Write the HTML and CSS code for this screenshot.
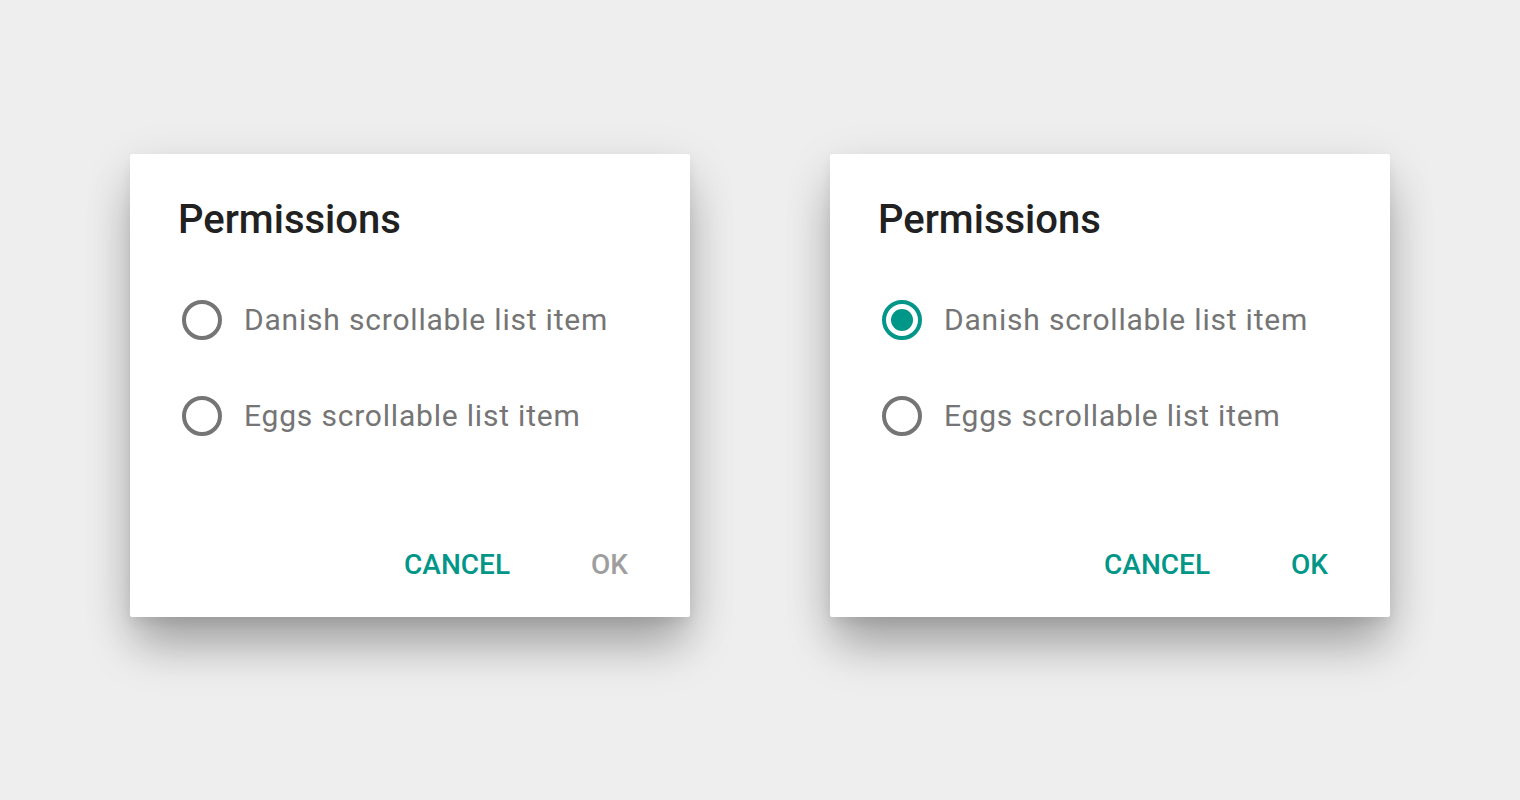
FILE: index.html
```html
<!doctype html>
<html>
  <head>
    <meta charset="utf-8">
    <title>Permissions dialogs</title>
    <link rel="stylesheet" href="styles.css">
  </head>
<body>

<div class="stage">

  <div class="dialog">
    <div class="dialogTitle">Permissions</div>
    <div class="options">
      <div class="option">
        <span class="radio"></span>
        <span class="label">Danish scrollable list item</span>
      </div>
      <div class="option">
        <span class="radio"></span>
        <span class="label">Eggs scrollable list item</span>
      </div>
    </div>
    <div class="actions">
      <span class="btn">CANCEL</span>
      <span class="btn disabled">OK</span>
    </div>
  </div>

  <div class="dialog">
    <div class="dialogTitle">Permissions</div>
    <div class="options">
      <div class="option">
        <span class="radio checked"></span>
        <span class="label">Danish scrollable list item</span>
      </div>
      <div class="option">
        <span class="radio"></span>
        <span class="label">Eggs scrollable list item</span>
      </div>
    </div>
    <div class="actions">
      <span class="btn">CANCEL</span>
      <span class="btn">OK</span>
    </div>
  </div>

</div>

</body>
</html>
```

FILE: styles.css
```css
*{
  box-sizing: border-box;
}
html, body{
  height: 100%;
}
body{
  margin: 0;
  padding: 0;
  background-color: #eeeeee;
  font-family: Roboto, "Liberation Sans", sans-serif;
}
.stage{
  display: flex;
  justify-content: center;
  align-items: flex-start;
  gap: 140px;
  padding-top: 154px;
  min-height: 800px;
}
.dialog{
  width: 560px;
  height: 463px;
  background: #fff;
  border-radius: 2px;
  padding: 42px 0 0 48px;
  box-shadow: 0 34px 44px -6px rgba(0,0,0,0.26), 0 14px 50px rgba(0,0,0,0.12), 0 6px 12px rgba(0,0,0,0.06);
}
.dialogTitle{
  font-size: 40px;
  line-height: 48px;
  font-weight: 500;
  color: #212121;
}
.options{
  margin-top: 28px;
}
.option{
  display: flex;
  align-items: center;
  height: 96px;
}
.radio{
  width: 40px;
  height: 40px;
  margin-left: 4px;
  margin-right: 22px;
  border: 4px solid #757575;
  border-radius: 50%;
  display: flex;
  align-items: center;
  justify-content: center;
  flex-shrink: 0;
}
.radio.checked{
  border-color: #009688;
}
.radio.checked::after{
  content: "";
  width: 22px;
  height: 22px;
  border-radius: 50%;
  background: #009688;
}
.label{
  font-size: 30px;
  line-height: 96px;
  letter-spacing: 0.8px;
  color: #757575;
}
.actions{
  display: flex;
  justify-content: flex-end;
  gap: 81px;
  margin-top: 80px;
  padding-right: 62px;
}
.btn{
  font-size: 28px;
  line-height: 42px;
  font-weight: 500;
  color: #009688;
}
.btn.disabled{
  color: #9e9e9e;
}
```
